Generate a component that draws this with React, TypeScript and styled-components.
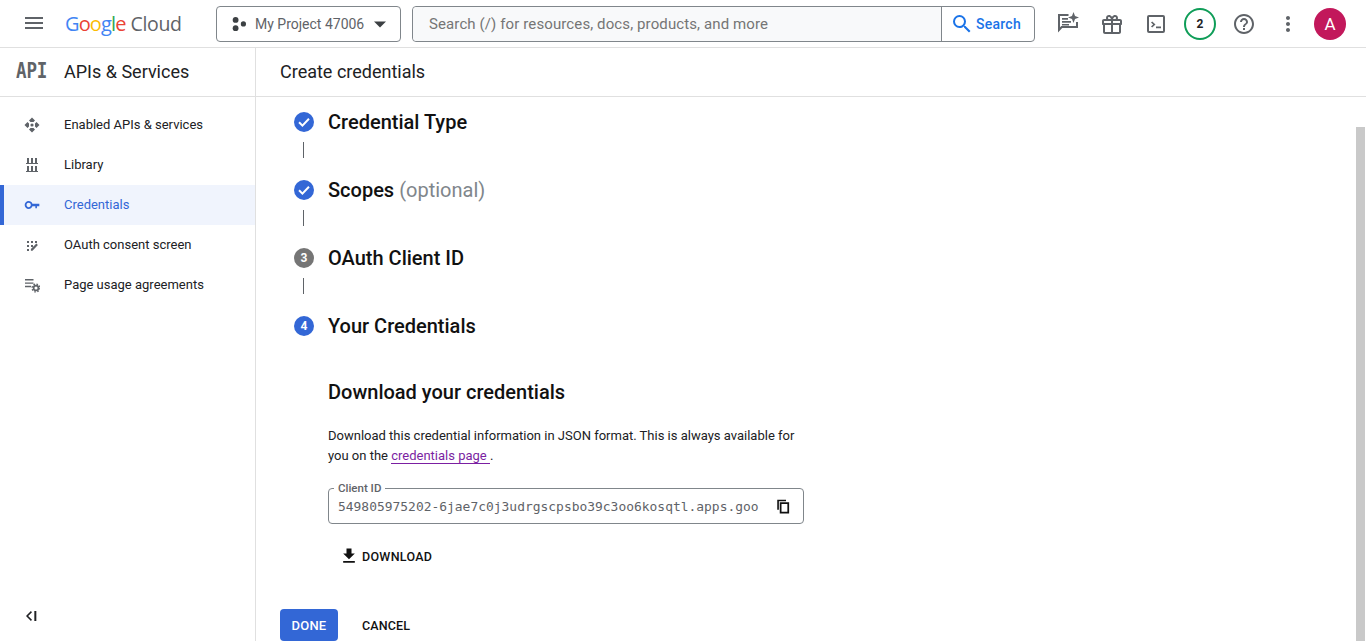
import React from 'react';
import styled, { createGlobalStyle } from 'styled-components';

const GlobalStyle = createGlobalStyle`
  html, body {
    margin: 0;
    height: 100%;
    overflow: hidden;
    background: #fff;
    font-family: Roboto, "Liberation Sans", sans-serif;
    color: #202124;
  }
  #root { height: 100%; }
  * { box-sizing: border-box; }
`;

const Page = styled.div`
  height: 641px;
  display: flex;
  flex-direction: column;
  position: relative;
  overflow: hidden;
`;

const Header = styled.header`
  height: 48px;
  flex: none;
  display: flex;
  align-items: center;
  border-bottom: 1px solid #e0e0e0;
  padding: 0 20px 0 22px;
`;

const MenuButton = styled.div`
  width: 24px;
  height: 24px;
  margin-right: 19px;
  margin-top: -1px;
  color: #5f6368;
`;

const Logo = styled.div`
  width: 151px;
  display: flex;
  font-family: "Open Sans", Roboto, sans-serif;
  font-size: 20px;
  letter-spacing: -0.88px;
  line-height: 24px;
`;

const LogoWord = styled.span<{ $c: string }>`
  color: ${({ $c }) => $c};
`;

const CloudWord = styled.span`
  color: #5f6368;
  margin-left: 5px;
  font-size: 19.5px;
  letter-spacing: -0.35px;
`;

const ProjectButton = styled.div`
  width: 185px;
  height: 36px;
  border: 1px solid #80868b;
  border-radius: 4px;
  display: flex;
  align-items: center;
  padding: 0 14px;
  margin-right: 11px;
  font-size: 14px;
  color: #5f6368;
  svg { flex: none; }
`;

const ProjectName = styled.span`
  margin-left: 8px;
  margin-right: 4px;
  white-space: nowrap;
`;

const SearchBox = styled.div`
  width: 623px;
  height: 36px;
  border: 1px solid #80868b;
  border-radius: 4px;
  display: flex;
  margin-right: 11px;
`;

const SearchInput = styled.div`
  width: 529px;
  background: #f8f9fa;
  border-right: 1px solid #80868b;
  border-radius: 4px 0 0 4px;
  padding-left: 16px;
  font-size: 15px;
  line-height: 34px;
  color: #757575;
  letter-spacing: 0.11px;
  white-space: nowrap;
`;

const SearchAction = styled.div`
  display: flex;
  align-items: center;
  padding-left: 8px;
  gap: 2px;
  font-size: 14px;
  font-weight: 500;
  color: #1a73e8;
  letter-spacing: 0.25px;
`;

const IconSlot = styled.div`
  width: 44px;
  height: 32px;
  display: flex;
  align-items: center;
  justify-content: center;
  color: #5f6368;
  svg { overflow: visible; }
`;

const Badge = styled.div`
  width: 32px;
  height: 32px;
  border: 2px solid #0f9d58;
  border-radius: 50%;
  display: flex;
  align-items: center;
  justify-content: center;
  font-size: 12px;
  font-weight: 700;
  color: #202124;
`;

const Avatar = styled.div`
  width: 32px;
  height: 32px;
  margin-left: 4px;
  border-radius: 50%;
  background: #c2185b;
  color: #fff;
  font-size: 17px;
  display: flex;
  align-items: center;
  justify-content: center;
`;

const Body = styled.div`
  flex: 1;
  min-height: 0;
  display: flex;
`;

const Sidebar = styled.nav`
  width: 256px;
  flex: none;
  border-right: 1px solid #e0e0e0;
  display: flex;
  flex-direction: column;
`;

const SectionHead = styled.div`
  height: 49px;
  flex: none;
  border-bottom: 1px solid #e0e0e0;
  display: flex;
  align-items: center;
  padding-bottom: 2px;
  font-size: 18px;
  color: #202124;
`;

const SideHead = styled(SectionHead)`
  padding-left: 16px;
`;

const ApiMark = styled.span`
  width: 48px;
  font-family: "DejaVu Sans Mono", monospace;
  font-weight: 700;
  font-size: 17.5px;
  letter-spacing: -0.1px;
  color: #5f6368;
  display: inline-block;
  transform: scaleY(1.22);
`;

const NavList = styled.div`
  padding-top: 8px;
  flex: 1;
`;

const NavItem = styled.div<{ $active?: boolean }>`
  height: 40px;
  display: flex;
  align-items: center;
  font-size: 13px;
  padding: ${({ $active }) => ($active ? '0 0 0 16px' : '0 0 0 20px')};
  border-left: ${({ $active }) => ($active ? '4px solid #3367d6' : 'none')};
  background: ${({ $active }) => ($active ? '#f0f4fd' : 'transparent')};
  color: ${({ $active }) => ($active ? '#3367d6' : '#202124')};
`;

const NavLabel = styled.span`
  margin-top: -2px;
`;

const NavIcon = styled.span<{ $active?: boolean }>`
  width: 24px;
  margin-right: 20px;
  display: flex;
  justify-content: center;
  color: ${({ $active }) => ($active ? '#3367d6' : '#5f6368')};
`;

const Collapse = styled.div`
  height: 33px;
  flex: none;
  padding-left: 24px;
  color: #202124;
`;

const Main = styled.main`
  flex: 1;
  min-width: 0;
  display: flex;
  flex-direction: column;
`;

const MainHead = styled(SectionHead)`
  padding-left: 24px;
`;

const Content = styled.div`
  padding: 5px 0 0 24px;
  flex: 1;
`;

const Steps = styled.div`
  padding-left: 14px;
`;

const StepRow = styled.div`
  height: 40px;
  display: flex;
  align-items: center;
  font-size: 20px;
  font-weight: 500;
  color: #111;
`;

const StepCircle = styled.span<{ $c: string }>`
  width: 20px;
  height: 20px;
  flex: none;
  margin-right: 14px;
  border-radius: 50%;
  background: ${({ $c }) => $c};
  color: #fff;
  font-size: 12px;
  font-weight: 700;
  display: flex;
  align-items: center;
  justify-content: center;
`;

const Optional = styled.span`
  margin-left: 5px;
  font-weight: 400;
  color: #80868b;
`;

const Connector = styled.div`
  width: 1px;
  height: 16px;
  margin: 0 0 12px 9px;
  background: #5f6368;
`;

const Details = styled.section`
  width: 476px;
  margin-left: 34px;
  padding-top: 32px;
`;

const DetailTitle = styled.h2`
  margin: 0;
  font-size: 20px;
  line-height: 28px;
  font-weight: 500;
  color: #111;
`;

const Para = styled.p`
  margin: 20px 0 0;
  font-size: 13px;
  line-height: 20px;
  color: #202124;
`;

const PageLink = styled.span`
  color: #7b1fa2;
  border-bottom: 1px solid #7b1fa2;
`;

const Field = styled.div`
  position: relative;
  height: 36px;
  margin-top: 22px;
  border: 1px solid #80868b;
  border-radius: 4px;
  display: flex;
  align-items: center;
  justify-content: space-between;
  padding: 0 11px 0 9px;
`;

const FieldLabel = styled.span`
  position: absolute;
  left: 5px;
  top: -8px;
  padding: 0 4px;
  background: #fff;
  font-size: 11.5px;
  line-height: 14px;
  font-weight: 500;
  color: #5f6368;
`;

const FieldValue = styled.span`
  font-family: "DejaVu Sans Mono", "Liberation Mono", monospace;
  font-size: 12.95px;
  color: #5f6368;
  white-space: nowrap;
`;

const CopyIcon = styled.span`
  display: flex;
  margin-right: 1px;
  color: #111;
`;

const DownloadButton = styled.div`
  display: inline-flex;
  align-items: center;
  height: 36px;
  margin: 14px 0 0 11px;
  gap: 3px;
  font-size: 12.5px;
  font-weight: 500;
  letter-spacing: 0.3px;
  color: #111;
`;

const Actions = styled.div`
  display: flex;
  align-items: center;
  margin-top: 35px;
`;

const DoneButton = styled.div`
  width: 58px;
  height: 32px;
  background: #3367d6;
  border-radius: 4px;
  color: #fff;
  font-size: 13px;
  font-weight: 500;
  letter-spacing: 0.2px;
  display: flex;
  align-items: center;
  justify-content: center;
`;

const CancelButton = styled.div`
  margin-left: 24px;
  font-size: 12.5px;
  font-weight: 500;
  letter-spacing: 0.15px;
  color: #111;
`;

const ScrollThumb = styled.div`
  position: absolute;
  right: 1px;
  top: 127px;
  bottom: 0;
  width: 9px;
  background: #c9c9c9;
`;

const Icon = ({ d, size = 24, box = 24 }: { d: string; size?: number; box?: number }) => (
  <svg width={size} height={size} viewBox={`0 0 ${box} ${box}`} fill="currentColor">
    <path d={d} />
  </svg>
);

const CheckCircle = () => (
  <svg width="14" height="14" viewBox="0 0 24 24" fill="none" stroke="#fff" strokeWidth="3.4">
    <path d="M3.5 12.5l5.8 5.8L20.5 6.5" />
  </svg>
);

const PATHS = {
  menu: 'M3 18h18v-2H3v2zm0-5h18v-2H3v2zm0-7v2h18V6H3z',
  search:
    'M15.5 14h-.79l-.28-.27A6.47 6.47 0 0 0 16 9.5 6.5 6.5 0 1 0 9.5 16c1.61 0 3.09-.59 4.23-1.57l.27.28v.79l5 4.99L20.49 19l-4.99-5zm-6 0C7.01 14 5 11.99 5 9.5S7.01 5 9.5 5 14 7.01 14 9.5 11.99 14 9.5 14z',
  help:
    'M11 18h2v-2h-2v2zm1-16C6.48 2 2 6.48 2 12s4.48 10 10 10 10-4.48 10-10S17.52 2 12 2zm0 18c-4.41 0-8-3.59-8-8s3.59-8 8-8 8 3.59 8 8-3.59 8-8 8zm0-14c-2.21 0-4 1.79-4 4h2c0-1.1.9-2 2-2s2 .9 2 2c0 2-3 1.75-3 5h2c0-2.25 3-2.5 3-5 0-2.21-1.79-4-4-4z',
  more:
    'M12 8c1.1 0 2-.9 2-2s-.9-2-2-2-2 .9-2 2 .9 2 2 2zm0 2c-1.1 0-2 .9-2 2s.9 2 2 2 2-.9 2-2-.9-2-2-2zm0 6c-1.1 0-2 .9-2 2s.9 2 2 2 2-.9 2-2-.9-2-2-2z',
  gift:
    'M20 7h-2.2c.1-.3.2-.7.2-1 0-1.7-1.3-3-3-3-1.1 0-2.2.6-2.8 1.5L12 5l-.2-.5C11.2 3.6 10.1 3 9 3 7.3 3 6 4.3 6 6c0 .3.1.7.2 1H4c-1.1 0-2 .9-2 2v3c0 .6.4 1 1 1v7c0 1.1.9 2 2 2h14c1.1 0 2-.9 2-2v-7c.6 0 1-.4 1-1V9c0-1.1-.9-2-2-2zM15 5c.6 0 1 .4 1 1s-.4 1-1 1h-2l.6-1c.3-.6.8-1 1.4-1zM9 5c.6 0 1.1.4 1.4 1l.6 1H9c-.6 0-1-.4-1-1s.4-1 1-1zM4 9h7v2H4V9zm1 11v-7h6v7H5zm14 0h-6v-7h6v7zm1-9h-7V9h7v2z',
  terminal:
    'M19 3H5a2 2 0 0 0-2 2v14a2 2 0 0 0 2 2h14a2 2 0 0 0 2-2V5a2 2 0 0 0-2-2zm0 16H5V5h14v14zM7 10.5l1.2-1.1 3.3 3.1-3.3 3.1L7 14.5l2.1-2L7 10.5zM12 14.6h5v1.6h-5v-1.6z',
  feedback:
    'M2 2h10.5v2H4v11.3L5.3 14H20v-4h2v6H6.2L2 20.5V2zM6 6h6v1.8H6V6zm0 3h9v1.8H6V9zm0 3h7v1.6H6V12zM17.5 0l1.5 4 4 1.5-4 1.5-1.5 4-1.5-4-4-1.5 4-1.5 1.5-4z',
  key:
    'M12.65 10C11.83 7.67 9.61 6 7 6c-3.31 0-6 2.69-6 6s2.69 6 6 6c2.61 0 4.83-1.67 5.65-4H17v3h2.4v-3H23v-4H12.65zM7 15.2c-1.77 0-3.2-1.43-3.2-3.2S5.23 8.8 7 8.8s3.2 1.43 3.2 3.2-1.43 3.2-3.2 3.2z',
  copy: 'M16 1H2v16h2.6V3.6H16V1zM21 5H6v18h15V5zm-2.8 15.2H8.8V7.8h9.4v12.4z',
  download: 'M19 9h-4V3H9v6H5l7 7 7-7zM5 18v2h14v-2H5z',
  api:
    'M8 .5l3 3L9.5 5h-3L5 3.5l3-3zM.5 8l3-3L5 6.5v3L3.5 11l-3-3zm15 0l-3 3L11 9.5v-3L12.5 5l3 3zM8 15.5l-3-3L6.5 11h3l1.5 1.5-3 3zM8 6.4a1.6 1.6 0 1 1 0 3.2 1.6 1.6 0 0 1 0-3.2z',
  library:
    'M3 1h2v5H3V1zm4 0h2v5H7V1zm4 0h2v5h-2V1zM2 6h12v1H2V6zm1 3h2v5H3V9zm4 0h2v5H7V9zm4 0h2v5h-2V9zM2 14h12v1H2v-1z',
  oauth:
    'M3 4h2v2H3V4zm4 0h2v2H7V4zm4 0h2v2h-2V4zM3 8h2v2H3V8zm4 0h2v2H7V8zM3 12h2v2H3v-2zM12.4 6.6l1.5 1.5-5.4 5.6H6.9v-1.6l5.5-5.5z',
  collapse: 'M12 6.2L10.4 4.6 3 12l7.4 7.4 1.6-1.6L6.2 12 12 6.2zM15.5 4.5h3v15h-3v-15z',
};

const ProjectIcon = () => (
  <svg width="16" height="16" viewBox="0 0 16 16" fill="#3c4043">
    <circle cx="4.6" cy="3.9" r="2.9" />
    <circle cx="12.4" cy="7.9" r="2.6" />
    <circle cx="4.6" cy="12.2" r="2.9" />
  </svg>
);

const Arrow = () => (
  <svg width="24" height="24" viewBox="0 0 24 24" fill="#3c4043">
    <path d="M6 9.5l6 6 6-6z" />
  </svg>
);

const UsageIcon = () => (
  <svg width="16" height="16" viewBox="0 0 16 16" fill="currentColor">
    <path d="M1 2h8.5v1.4H1V2zm0 3.4h8.5v1.4H1V5.4zm0 3.4h6v1.4H1V8.8z" />
    <circle cx="12" cy="11" r="2.4" fill="none" stroke="currentColor" strokeWidth="1.7" />
    <circle cx="12" cy="11" r="3.9" fill="none" stroke="currentColor" strokeWidth="1.4" strokeDasharray="1.6 1.46" />
  </svg>
);

const NAV = [
  { label: 'Enabled APIs & services', icon: <Icon d={PATHS.api} size={16} box={16} /> },
  { label: 'Library', icon: <Icon d={PATHS.library} size={16} box={16} /> },
  { label: 'Credentials', icon: <Icon d={PATHS.key} size={16} />, active: true },
  { label: 'OAuth consent screen', icon: <Icon d={PATHS.oauth} size={16} box={16} /> },
  { label: 'Page usage agreements', icon: <UsageIcon /> },
];

export default function App() {
  return (
    <Page>
      <GlobalStyle />
      <Header>
        <MenuButton>
          <Icon d={PATHS.menu} />
        </MenuButton>
        <Logo>
          <LogoWord $c="#4285f4">G</LogoWord>
          <LogoWord $c="#ea4335">o</LogoWord>
          <LogoWord $c="#fbbc04">o</LogoWord>
          <LogoWord $c="#4285f4">g</LogoWord>
          <LogoWord $c="#34a853">l</LogoWord>
          <LogoWord $c="#ea4335">e</LogoWord>
          <CloudWord>Cloud</CloudWord>
        </Logo>
        <ProjectButton>
          <ProjectIcon />
          <ProjectName>My Project 47006</ProjectName>
          <Arrow />
        </ProjectButton>
        <SearchBox>
          <SearchInput>Search (/) for resources, docs, products, and more</SearchInput>
          <SearchAction>
            <Icon d={PATHS.search} />
            Search
          </SearchAction>
        </SearchBox>
        <IconSlot>
          <Icon d={PATHS.feedback} />
        </IconSlot>
        <IconSlot>
          <Icon d={PATHS.gift} />
        </IconSlot>
        <IconSlot>
          <Icon d={PATHS.terminal} />
        </IconSlot>
        <IconSlot>
          <Badge>2</Badge>
        </IconSlot>
        <IconSlot>
          <Icon d={PATHS.help} />
        </IconSlot>
        <IconSlot>
          <Icon d={PATHS.more} />
        </IconSlot>
        <Avatar>A</Avatar>
      </Header>
      <Body>
        <Sidebar>
          <SideHead>
            <ApiMark>API</ApiMark>
            APIs &amp; Services
          </SideHead>
          <NavList>
            {NAV.map((item) => (
              <NavItem key={item.label} $active={item.active}>
                <NavIcon $active={item.active}>{item.icon}</NavIcon>
                <NavLabel>{item.label}</NavLabel>
              </NavItem>
            ))}
          </NavList>
          <Collapse>
            <Icon d={PATHS.collapse} size={16} />
          </Collapse>
        </Sidebar>
        <Main>
          <MainHead>Create credentials</MainHead>
          <Content>
            <Steps>
              <StepRow>
                <StepCircle $c="#3367d6">
                  <CheckCircle />
                </StepCircle>
                Credential Type
              </StepRow>
              <Connector />
              <StepRow>
                <StepCircle $c="#3367d6">
                  <CheckCircle />
                </StepCircle>
                Scopes
                <Optional>(optional)</Optional>
              </StepRow>
              <Connector />
              <StepRow>
                <StepCircle $c="#757575">3</StepCircle>
                OAuth Client ID
              </StepRow>
              <Connector />
              <StepRow>
                <StepCircle $c="#3367d6">4</StepCircle>
                Your Credentials
              </StepRow>
              <Details>
                <DetailTitle>Download your credentials</DetailTitle>
                <Para>
                  Download this credential information in JSON format. This is always available for you on the{' '}
                  <PageLink>credentials page </PageLink> .
                </Para>
                <Field>
                  <FieldLabel>Client ID</FieldLabel>
                  <FieldValue>549805975202-6jae7c0j3udrgscpsbo39c3oo6kosqtl.apps.goo</FieldValue>
                  <CopyIcon>
                    <Icon d={PATHS.copy} size={15} />
                  </CopyIcon>
                </Field>
                <DownloadButton>
                  <Icon d={PATHS.download} size={20} />
                  DOWNLOAD
                </DownloadButton>
              </Details>
            </Steps>
            <Actions>
              <DoneButton>DONE</DoneButton>
              <CancelButton>CANCEL</CancelButton>
            </Actions>
          </Content>
        </Main>
      </Body>
      <ScrollThumb />
    </Page>
  );
}
